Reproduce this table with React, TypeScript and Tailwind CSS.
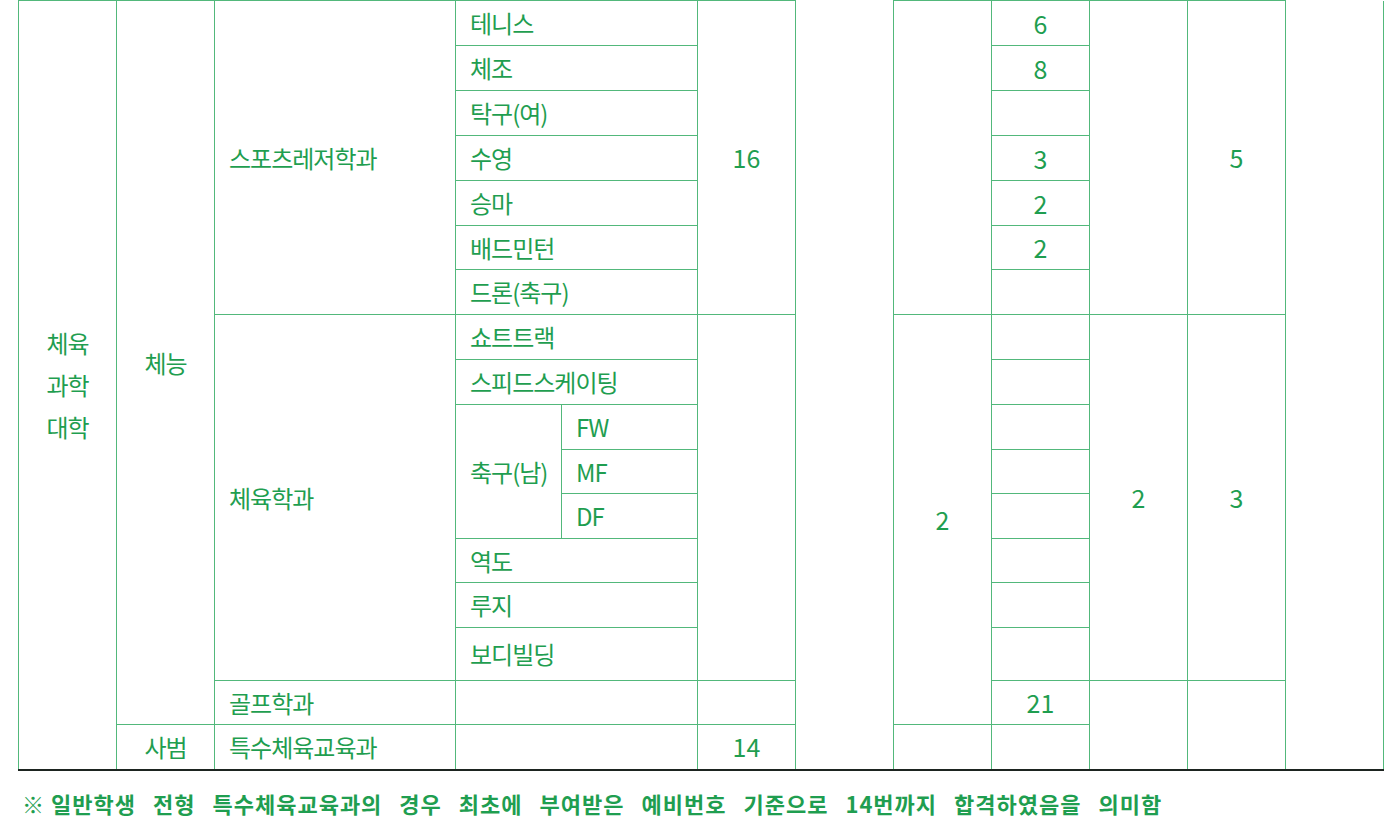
import type { ReactNode } from "react";

type CellProps = {
  children?: ReactNode;
  rowSpan?: number;
  colSpan?: number;
  left?: boolean;
  noTop?: boolean;
  num?: boolean;
};

function Cell({ children, rowSpan, colSpan, left, noTop, num }: CellProps) {
  return (
    <td
      rowSpan={rowSpan}
      colSpan={colSpan}
      className={`border border-[#52b87b] align-middle leading-none ${noTop ? "border-t-0" : ""} ${
        left ? "pl-[14px] text-left" : "text-center"
      } ${num ? "text-[25px]" : "text-[24px] tracking-[-1px]"}`}
    >
      {children}
    </td>
  );
}

export default function App() {
  const widths = [98, 98, 241, 106, 136, 98, 98, 98, 98, 98, 98, 98];

  return (
    <div className="min-h-[834px] bg-white font-['Noto_Sans_CJK_KR','Noto_Sans',sans-serif] text-[#1f9e50]">
      <div className="pl-[18px] pr-[17px]">
        <table className="w-[1365px] table-fixed border-collapse border-b-2 border-b-[#1d2420]">
          <colgroup>
            {widths.map((w, i) => (
              <col key={i} style={{ width: w }} />
            ))}
          </colgroup>
          <tbody>
            <tr className="h-[45px]">
              <td rowSpan={17} className="border border-[#52b87b] text-center align-middle text-[24px] leading-[42px] tracking-[-1px]">
                체육
                <br />
                과학
                <br />
                대학
              </td>
              <Cell rowSpan={16}>체능</Cell>
              <Cell rowSpan={7} left>스포츠레저학과</Cell>
              <Cell colSpan={2} left>테니스</Cell>
              <Cell rowSpan={7} num>16</Cell>
              <Cell rowSpan={17} noTop />
              <Cell rowSpan={7} />
              <Cell num>6</Cell>
              <Cell rowSpan={7} />
              <Cell rowSpan={7} num>5</Cell>
              <Cell rowSpan={17} noTop />
            </tr>
            <tr className="h-[45px]">
              <Cell colSpan={2} left>체조</Cell>
              <Cell num>8</Cell>
            </tr>
            <tr className="h-[45px]">
              <Cell colSpan={2} left>탁구(여)</Cell>
              <Cell />
            </tr>
            <tr className="h-[45px]">
              <Cell colSpan={2} left>수영</Cell>
              <Cell num>3</Cell>
            </tr>
            <tr className="h-[45px]">
              <Cell colSpan={2} left>승마</Cell>
              <Cell num>2</Cell>
            </tr>
            <tr className="h-[44px]">
              <Cell colSpan={2} left>배드민턴</Cell>
              <Cell num>2</Cell>
            </tr>
            <tr className="h-[45px]">
              <Cell colSpan={2} left>드론(축구)</Cell>
              <Cell />
            </tr>

            <tr className="h-[45px]">
              <Cell rowSpan={8} left>체육학과</Cell>
              <Cell colSpan={2} left>쇼트트랙</Cell>
              <Cell rowSpan={8} />
              <Cell rowSpan={9} num>2</Cell>
              <Cell />
              <Cell rowSpan={8} num>2</Cell>
              <Cell rowSpan={8} num>3</Cell>
            </tr>
            <tr className="h-[45px]">
              <Cell colSpan={2} left>스피드스케이팅</Cell>
              <Cell />
            </tr>
            <tr className="h-[45px]">
              <Cell rowSpan={3} left>축구(남)</Cell>
              <Cell left>FW</Cell>
              <Cell />
            </tr>
            <tr className="h-[44px]">
              <Cell left>MF</Cell>
              <Cell />
            </tr>
            <tr className="h-[45px]">
              <Cell left>DF</Cell>
              <Cell />
            </tr>
            <tr className="h-[44px]">
              <Cell colSpan={2} left>역도</Cell>
              <Cell />
            </tr>
            <tr className="h-[45px]">
              <Cell colSpan={2} left>루지</Cell>
              <Cell />
            </tr>
            <tr className="h-[53px]">
              <Cell colSpan={2} left>보디빌딩</Cell>
              <Cell />
            </tr>

            <tr className="h-[44px]">
              <Cell left>골프학과</Cell>
              <Cell colSpan={2} />
              <Cell />
              <Cell num>21</Cell>
              <Cell rowSpan={2} />
              <Cell rowSpan={2} />
            </tr>
            <tr className="h-[45px]">
              <Cell>사범</Cell>
              <Cell left>특수체육교육과</Cell>
              <Cell colSpan={2} />
              <Cell num>14</Cell>
              <Cell />
              <Cell />
            </tr>
          </tbody>
        </table>
      </div>

      <p className="mt-[21px] pl-[22px] text-[22px] font-bold leading-none tracking-[1px] text-[#1f9e50]">
        ※{" "}
        <span className="[word-spacing:11px]">
          일반학생 전형 특수체육교육과의 경우 최초에 부여받은 예비번호 기준으로 14번까지 합격하였음을 의미함
        </span>
      </p>
    </div>
  );
}
